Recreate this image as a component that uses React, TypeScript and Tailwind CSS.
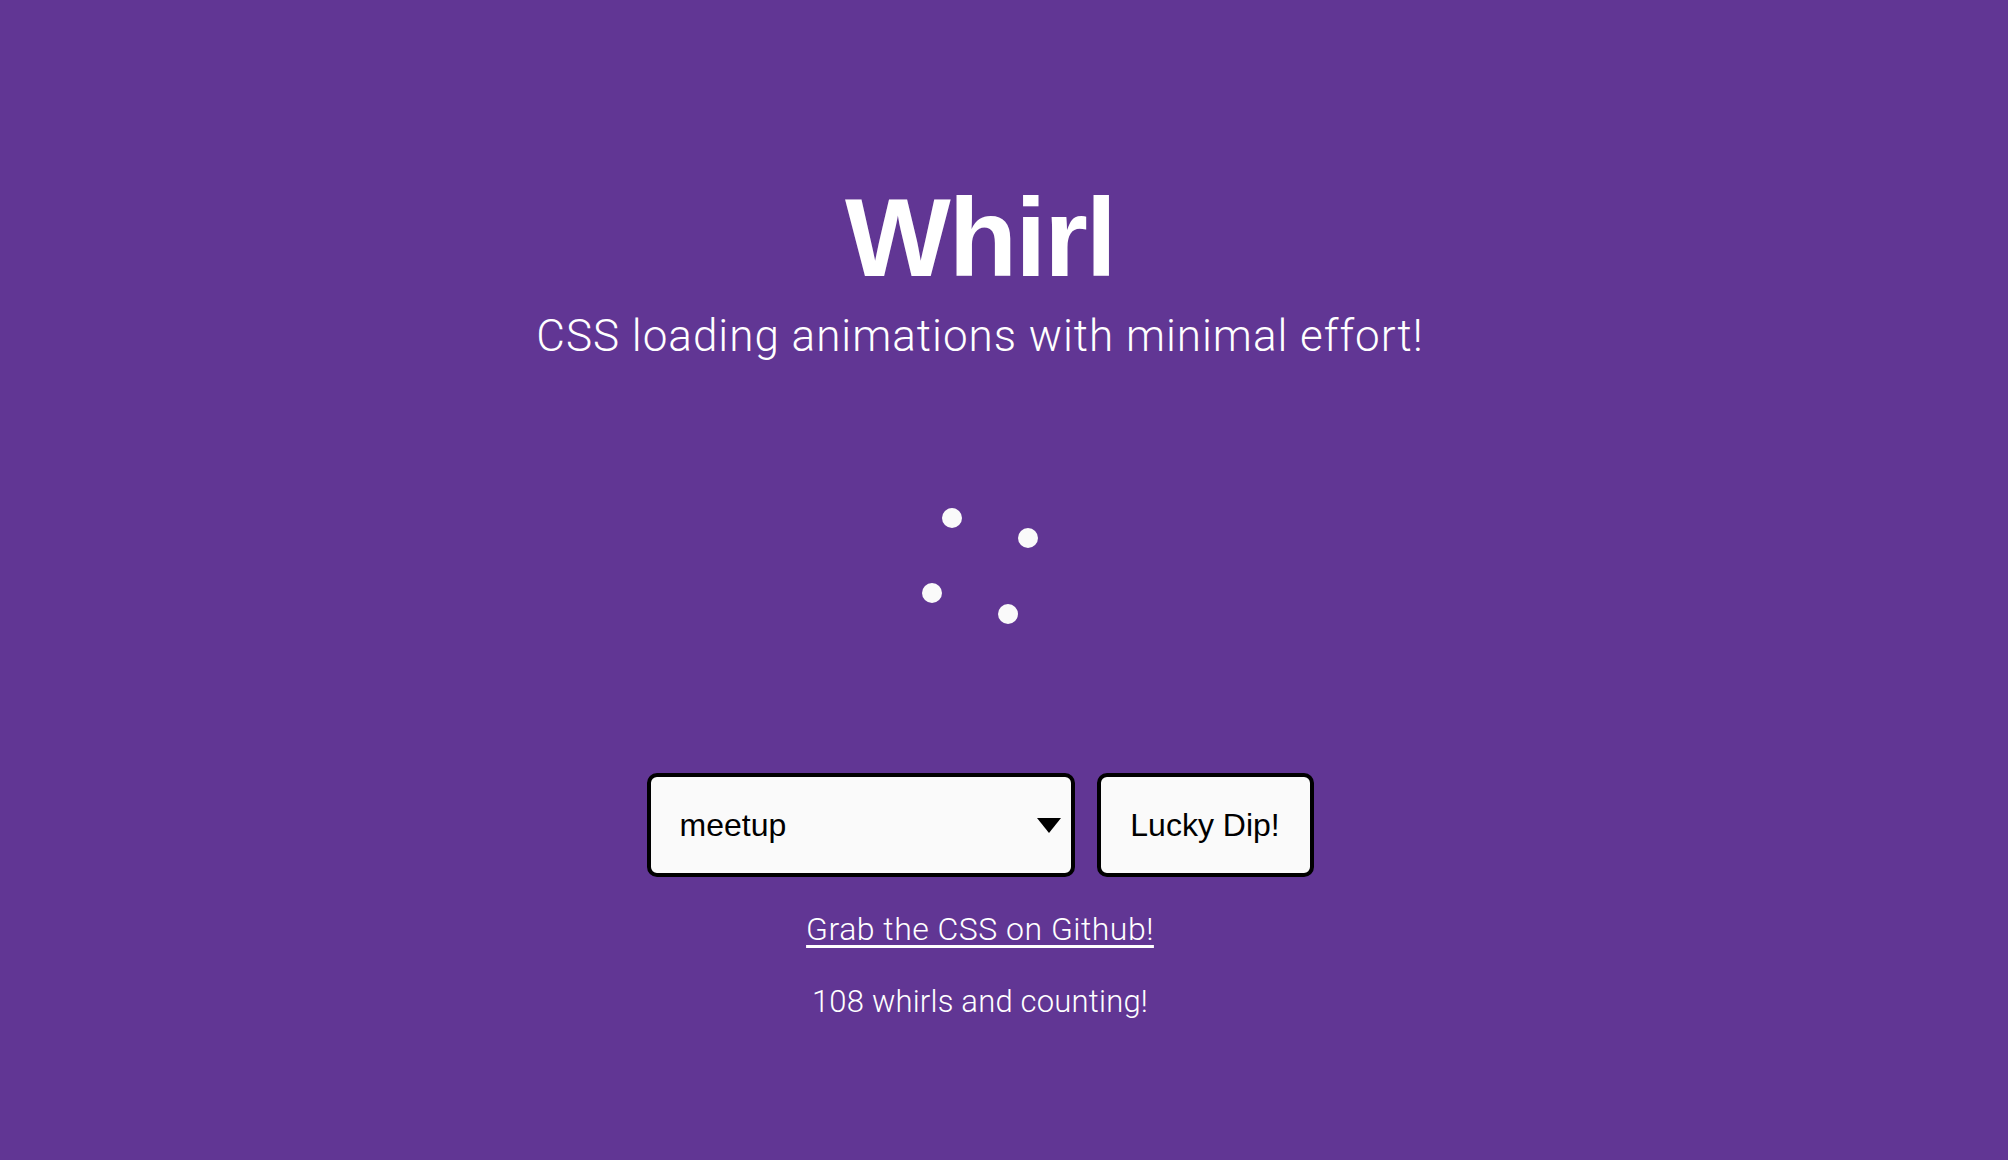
import React from "react";

const dots: Array<[number, number]> = [
  [72, 52],
  [148, 72],
  [52, 127],
  [128, 148],
];

/** Frozen frame of the "meetup" whirl */
const Spinner = () => (
  <svg viewBox="0 0 200 200" className="h-[200px] w-[200px]" aria-hidden>
    {dots.map(([cx, cy], i) => (
      <circle key={i} cx={cx} cy={cy} r="10" fill="#fafafa" />
    ))}
  </svg>
);

const App: React.FC = () => {
  return (
    <main className="min-h-[1160px] w-full bg-[#613694] pr-12 text-white font-['Liberation_Sans',Arial,sans-serif]">
      <div className="flex flex-col items-center pt-[182px]">
        {/* Header */}
        <h1 className="text-[112px] font-bold leading-none tracking-[-2px]">Whirl</h1>
        <p className="mt-[20px] text-[44px] leading-none font-light tracking-[1px] font-['Roboto','Liberation_Sans',sans-serif]">
          CSS loading animations with minimal effort!
        </p>

        {/* Whirl */}
        <div className="mt-[108px]">
          <Spinner />
        </div>

        {/* Controls */}
        <div className="mt-[107px] flex items-center gap-[22px] text-black">
          <div className="relative">
            <select
              defaultValue="meetup"
              className="h-[104px] w-[428px] appearance-none rounded-[10px] border-4 border-black bg-[#fafafa] pl-[29px] pr-16 text-[32px] text-black outline-none"
            >
              <option value="meetup">meetup</option>
            </select>
            <svg
              viewBox="0 0 24 15"
              className="pointer-events-none absolute right-[14px] top-[45px] h-[15px] w-[24px]"
              aria-hidden
            >
              <path d="M0 0h24L12 15z" fill="#000" />
            </svg>
          </div>
          <button className="h-[104px] w-[217px] rounded-[10px] border-4 border-black bg-[#fafafa] text-[32px] text-black">
            Lucky Dip!
          </button>
        </div>

        {/* Footer */}
        <a
          href="#"
          className="mt-[36px] text-[32px] leading-none font-light tracking-[0.5px] underline underline-offset-[5px] font-['Roboto','Liberation_Sans',sans-serif]"
        >
          Grab the CSS on Github!
        </a>
        <p className="mt-[41px] text-[31px] leading-none font-light tracking-[0.2px] font-['Roboto','Liberation_Sans',sans-serif]">
          108 whirls and counting!
        </p>
      </div>
    </main>
  );
};

export default App;
